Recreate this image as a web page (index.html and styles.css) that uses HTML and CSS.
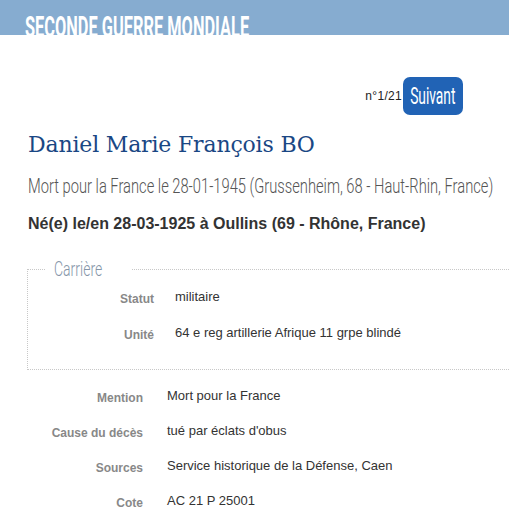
FILE: index.html
```html
<!DOCTYPE html>
<html lang="fr">
<head>
<meta charset="utf-8">
<link rel="stylesheet" href="styles.css">
</head>
<body>
<header class="band">
  <h1 class="band-title"><span class="cond">SECONDE GUERRE MONDIALE</span></h1>
</header>
<main class="page">
  <div class="pager">
    <span class="count">n°1/21</span>
    <a class="next"><span class="cond">Suivant</span></a>
  </div>
  <h2 class="name">Daniel Marie François BO</h2>
  <p class="death"><span class="cond">Mort pour la France le 28-01-1945 (Grussenheim, 68 - Haut-Rhin, France)</span></p>
  <p class="birth">Né(e) le/en 28-03-1925 à Oullins (69 - Rhône, France)</p>
  <fieldset class="career">
    <legend class="legend"><span class="cond">Carrière</span></legend>
    <dl class="rows rows-in">
      <dt>Statut</dt><dd>militaire</dd>
      <dt>Unité</dt><dd>64 e reg artillerie Afrique 11 grpe blindé</dd>
    </dl>
  </fieldset>
  <dl class="rows rows-out">
    <dt>Mention</dt><dd>Mort pour la France</dd>
    <dt>Cause du décès</dt><dd>tué par éclats d'obus</dd>
    <dt>Sources</dt><dd>Service historique de la Défense, Caen</dd>
    <dt>Cote</dt><dd>AC 21 P 25001</dd>
  </dl>
</main>
</body>
</html>
```
FILE: styles.css
```css
html, body { margin: 0; padding: 0; background: #fff; }
body { font-family: "Liberation Sans", Arial, sans-serif; color: #333; overflow: hidden; }

.cond { display: inline-block; font-family: Roboto, "DejaVu Sans Condensed", sans-serif; transform-origin: left top; white-space: nowrap; }

.band { height: 35px; background: #86acd0; }
.band-title { margin: 0; padding: 12px 0 0 25px; font-size: 30px; line-height: 30px; font-weight: bold; color: #fff; white-space: nowrap; }
.band-title .cond { transform: scaleX(0.546); }

.page { padding: 0 0 0 28px; }

.pager { display: flex; justify-content: flex-end; align-items: center; margin: 42px 46px 0 0; height: 38px; }
.count { font-size: 12px; letter-spacing: 0.3px; color: #222; margin-right: 1px; }
.next { display: flex; align-items: center; justify-content: center; width: 60px; height: 38px; background: #2163b5; border-radius: 7px; color: #fff; font-size: 23px; }
.next .cond { transform: scaleX(0.6); transform-origin: center; }

.name { margin: 17px 0 0; font-family: "DejaVu Serif", "Liberation Serif", serif; font-weight: normal; font-size: 22px; letter-spacing: -0.17px; color: #1a4784; }

.death { margin: 17px 0 0; font-size: 21px; line-height: 24px; color: #555; white-space: nowrap; }
.death .cond { font-weight: 300; transform: scaleX(0.7); }

.birth { margin: 17px 0 0; font-size: 16px; font-weight: bold; color: #333; }

.career { margin: 25px 0 0 -1px; padding: 0 0 27px; border: 1px dotted #c8c8c8; border-right: 0; }
.legend { margin-left: 18px; padding: 0 8px; font-size: 20px; line-height: 22px; color: #8595a8; }
.legend .cond { font-weight: 300; transform: scaleX(0.7); }

.rows { display: grid; margin: 0; font-size: 12px; }
.rows dt { text-align: right; font-weight: bold; color: #888; padding-top: 3px; line-height: 14px; }
.rows dd { margin: 0; color: #333; font-size: 13px; line-height: 15px; }
.rows-in { grid-template-columns: 126px auto; column-gap: 21px; row-gap: 19px; margin-top: 9px; }
.rows-out { grid-template-columns: 115px auto; column-gap: 24px; row-gap: 18px; margin-top: 18px; }
```
